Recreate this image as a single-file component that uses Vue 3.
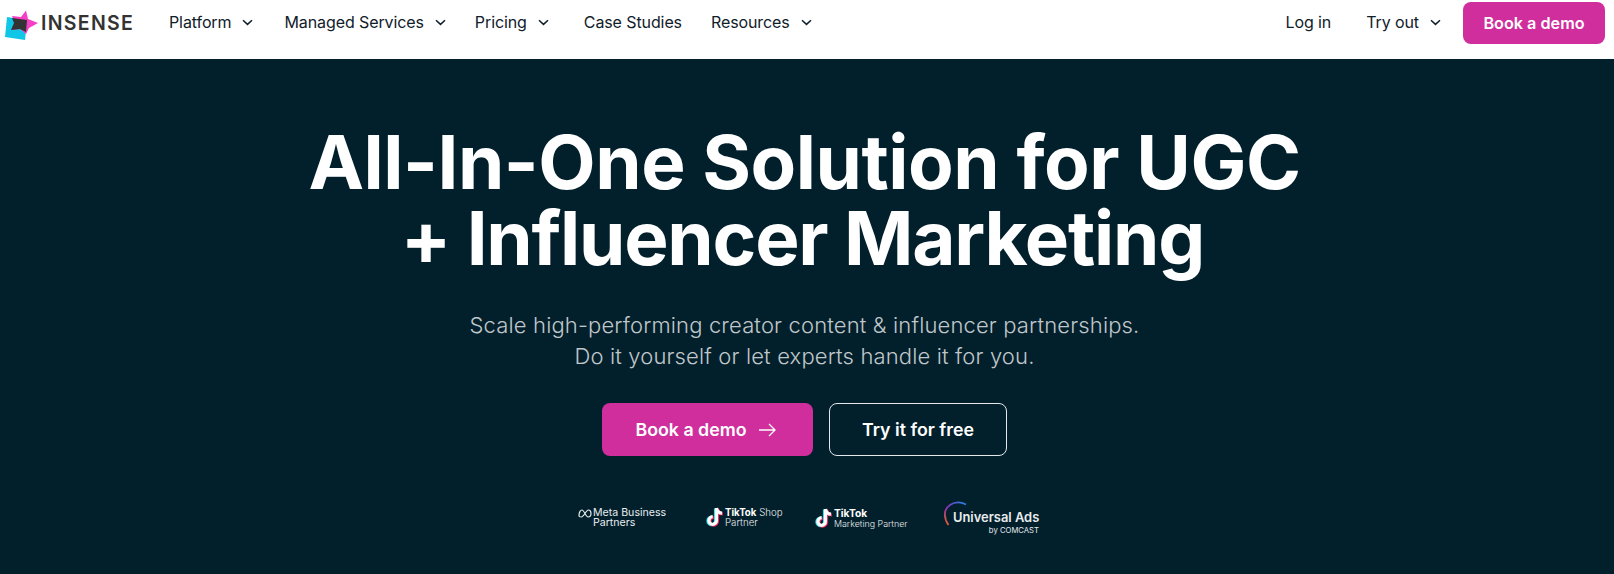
<script setup>
const leftNav = [
  { label: 'Platform', caret: true },
  { label: 'Managed Services', caret: true },
  { label: 'Pricing', caret: true },
  { label: 'Case Studies', caret: false },
  { label: 'Resources', caret: true },
]
</script>

<template>
  <div class="page">
    <header class="header">
      <a class="brand">
        <svg class="brand-mark" width="40" height="40" viewBox="0 0 40 40">
          <polygon points="7,14 27,17 25,37 5,34" fill="#10c6e6" />
          <polygon points="26,7.500 28,16 38,20 29,25 26,31 20,26 12,27 15,20 12,13 21,14" fill="#f63fc4" />
          <polygon points="12,15 27,17 26,29 20,26 11,27 14,20" fill="#333333" />
        </svg>
        <span class="brand-name">INSENSE</span>
      </a>
      <nav class="nav">
        <a v-for="item in leftNav" :key="item.label" class="nav-item" :class="{ plain: !item.caret }">
          <span>{{ item.label }}</span>
          <svg v-if="item.caret" class="caret" width="11" height="7" viewBox="0 0 11 7">
            <path d="M1 1.200 5.500 5.400 10 1.200" fill="none" stroke="#10202a" stroke-width="1.500" />
          </svg>
        </a>
      </nav>
      <div class="nav-right">
        <a class="nav-item">Log in</a>
        <a class="nav-item">
          <span>Try out</span>
          <svg class="caret" width="11" height="7" viewBox="0 0 11 7">
            <path d="M1 1.200 5.500 5.400 10 1.200" fill="none" stroke="#10202a" stroke-width="1.500" />
          </svg>
        </a>
        <a class="header-cta">Book a demo</a>
      </div>
    </header>

    <main class="hero">
      <h1 class="title"><span class="line-one">All-In-One Solution for UGC</span><span class="line-two">+ Influencer Marketing</span></h1>
      <p class="lead">Scale high-performing creator content &amp; influencer partnerships.<br />Do it yourself or let experts handle it for you.</p>
      <div class="actions">
        <a class="btn btn-primary">
          <span>Book a demo</span>
          <svg width="18" height="14" viewBox="0 0 18 14">
            <path d="M1 7H17M11 1l6 6-6 6" fill="none" stroke="#fff" stroke-width="1.300" />
          </svg>
        </a>
        <a class="btn btn-outline">Try it for free</a>
      </div>
      <div class="partners">
        <div class="partner meta">
          <div class="meta-top">
            <svg width="14" height="9" viewBox="0 0 14 9">
              <path d="M1 6.500C1 3 2.700 1 4 1c2 0 4 7 6 7 1.800 0 3-1.500 3-3.500S12 1 10.300 1C8 1 6 8 3.200 8 1.800 8 1 7.500 1 6.500Z" fill="none" stroke="#e8ecee" stroke-width="1.200" />
            </svg>
            <span>Meta Business</span>
          </div>
          <div class="meta-bottom">Partners</div>
        </div>

        <div class="partner tiktok shop">
          <svg class="note" width="18" height="22" viewBox="0 0 18 22">
            <g fill="none" stroke-width="3.200">
              <path d="M10.500 2v12.500a3.800 3.800 0 1 1-3.800-3.800M10.500 2c.4 3 2.500 5 5.500 5.200" stroke="#25e0e8" transform="translate(-1 .4)" />
              <path d="M10.500 2v12.500a3.800 3.800 0 1 1-3.800-3.800M10.500 2c.4 3 2.500 5 5.500 5.200" stroke="#f5215b" transform="translate(1 .8)" />
              <path d="M10.500 2v12.500a3.800 3.800 0 1 1-3.800-3.800M10.500 2c.4 3 2.500 5 5.500 5.200" stroke="#fff" />
            </g>
          </svg>
          <div class="tk-text">
            <div><b>TikTok</b> Shop</div>
            <div class="tk-sub">Partner</div>
          </div>
        </div>

        <div class="partner tiktok marketing">
          <svg class="note" width="18" height="22" viewBox="0 0 18 22">
            <g fill="none" stroke-width="3.200">
              <path d="M10.500 2v12.500a3.800 3.800 0 1 1-3.800-3.800M10.500 2c.4 3 2.500 5 5.500 5.200" stroke="#25e0e8" transform="translate(-1 .4)" />
              <path d="M10.500 2v12.500a3.800 3.800 0 1 1-3.800-3.800M10.500 2c.4 3 2.500 5 5.500 5.200" stroke="#f5215b" transform="translate(1 .8)" />
              <path d="M10.500 2v12.500a3.800 3.800 0 1 1-3.800-3.800M10.500 2c.4 3 2.500 5 5.500 5.200" stroke="#fff" />
            </g>
          </svg>
          <div class="tk-text">
            <div><b>TikTok</b></div>
            <div class="tk-sub">Marketing Partner</div>
          </div>
        </div>

        <div class="partner universal">
          <svg class="arc" width="26" height="28" viewBox="0 0 26 28">
            <defs>
              <linearGradient id="arcGrad" x1="0" y1="1" x2="1" y2="0">
                <stop offset="0" stop-color="#f26522" />
                <stop offset="0.45" stop-color="#8a2bb8" />
                <stop offset="1" stop-color="#1e88e5" />
              </linearGradient>
            </defs>
            <path d="M5.500 25C0 17 1 9 7 5 11.500 2 17 1.500 23 4.500" fill="none" stroke="url(#arcGrad)" stroke-width="1.800" />
          </svg>
          <div class="ua-title">Universal Ads</div>
          <div class="ua-sub">by COMCAST</div>
        </div>
      </div>
    </main>
  </div>
</template>

<style>
html, body { margin: 0; background: #02202c; }
</style>

<style scoped>
.page {
  width: 1614px;
  height: 574px;
  overflow: hidden;
  display: flex;
  flex-direction: column;
  font-family: Inter, "Open Sans", sans-serif;
  background: #02202c;
}
.header {
  height: 59px;
  flex: none;
  box-sizing: border-box;
  background: #fff;
  display: flex;
  align-items: flex-start;
  padding: 2px 9px 0 0;
  color: #10202a;
}
.brand {
  display: flex;
  align-items: center;
  width: 169px;
  height: 42px;
  flex: none;
}
.brand-mark { flex: none; margin-top: -1px; }
.brand-name {
  font-family: Inter, sans-serif;
  font-size: 19.500px;
  font-weight: 600;
  letter-spacing: 1.300px;
  color: #333;
  margin-left: 1px;
}
.nav {
  display: flex;
  gap: 29px;
}
.nav-item {
  display: flex;
  align-items: center;
  height: 40px;
  font-size: 16px;
  line-height: 20px;
  letter-spacing: -0.100px;
  color: #10202a;
  white-space: nowrap;
  gap: 11px;
}
.nav .nav-item:first-child { margin-right: 2px; }
.nav-item.plain { margin-left: 6px; }
.nav-right {
  margin-left: auto;
  display: flex;
  gap: 35px;
}
.header-cta {
  width: 142px;
  height: 42px;
  margin-left: -13px;
  border-radius: 8px;
  background: #cf2e9c;
  color: #fff;
  font-weight: 600;
  font-size: 16.200px;
  display: flex;
  align-items: center;
  justify-content: center;
}
.hero {
  flex: 1;
  display: flex;
  flex-direction: column;
  align-items: center;
  padding-right: 5px;
  color: #fff;
}
.title {
  margin: 65px 0 0;
  font-size: 74.500px;
  line-height: 76px;
  font-weight: 700;
  text-align: center;
  white-space: nowrap;
}
.line-one, .line-two { display: block; }
.line-one { letter-spacing: -0.450px; }
.line-two { letter-spacing: -1.200px; padding-right: 4px; }
.lead {
  margin: 34px 0 0;
  font-size: 22px;
  line-height: 31px;
  font-weight: 300;
  letter-spacing: 0.150px;
  color: #c0c7ca;
  text-align: center;
  white-space: nowrap;
}
.actions {
  display: flex;
  gap: 16px;
  margin-top: 31px;
}
.btn {
  height: 53px;
  box-sizing: border-box;
  border-radius: 8px;
  display: flex;
  align-items: center;
  justify-content: center;
  font-size: 17.800px;
  font-weight: 600;
  color: #fff;
}
.btn-primary {
  width: 211px;
  background: #cf2e9c;
  gap: 11px;
  padding-right: 4px;
}
.btn-outline {
  width: 178px;
  border: 1px solid #e4e8ea;
}
.partners {
  display: flex;
  align-items: flex-start;
  margin-top: 44px;
  margin-left: 12px;
  height: 50px;
  color: #e8ecee;
}
.partner { flex: none; }
.meta {
  width: 128px;
  margin-top: 8px;
  font-size: 10.600px;
  line-height: 10px;
  font-weight: 400;
}
.meta-top {
  display: flex;
  align-items: center;
  gap: 1px;
}
.meta-bottom { margin-left: 15px; }
.tiktok {
  display: flex;
  align-items: center;
  gap: 1px;
  margin-top: 8px;
}
.note { margin-top: -2px; }
.shop { width: 109px; }
.marketing { width: 128px; }
.tk-text {
  font-size: 9.700px;
  line-height: 10px;
  font-weight: 300;
}
.tk-text b { font-weight: 700; color: #fff; }
.marketing .tk-text b { font-size: 10.200px; }
.marketing .tk-sub { font-size: 8.900px; }
.universal {
  position: relative;
  width: 100px;
  height: 40px;
}
.arc {
  position: absolute;
  left: 0;
  top: 0;
}
.ua-title {
  position: absolute;
  left: 10px;
  top: 10px;
  font-size: 12.900px;
  font-weight: 600;
  white-space: nowrap;
}
.ua-sub {
  position: absolute;
  right: 4px;
  top: 26px;
  font-size: 7.700px;
  white-space: nowrap;
}
</style>
